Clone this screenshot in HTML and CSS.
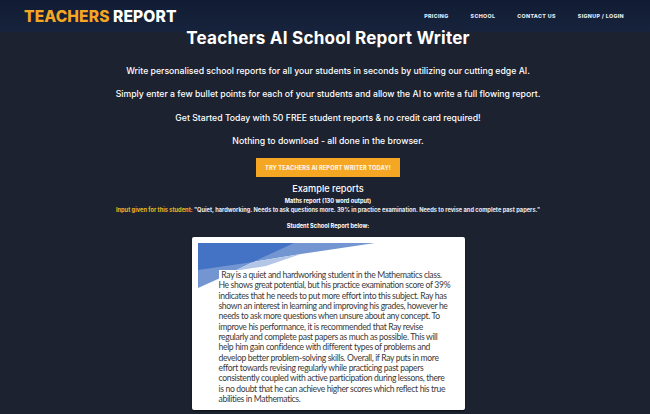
FILE: index.html
```html
<!DOCTYPE html>
<html lang="en">
<head>
<meta charset="utf-8">
<title>Teachers Report</title>
<link rel="stylesheet" href="styles.css">
</head>
<body>
<header class="topbar">
  <a class="brand"><span class="brand-accent">TEACHERS</span> REPORT</a>
  <nav class="nav">
    <a>PRICING</a>
    <a>SCHOOL</a>
    <a>CONTACT US</a>
    <a>SIGNUP / LOGIN</a>
  </nav>
</header>
<main class="content">
  <h1 class="title">Teachers AI School Report Writer</h1>
  <p class="lead">Write personalised school reports for all your students in seconds by utilizing our cutting edge AI.</p>
  <p class="lead">Simply enter a few bullet points for each of your students and allow the AI to write a full flowing report.</p>
  <p class="lead">Get Started Today with 50 FREE student reports &amp; no credit card required!</p>
  <p class="lead">Nothing to download - all done in the browser.</p>
  <a class="cta">TRY TEACHERS AI REPORT WRITER TODAY!</a>
  <h2 class="section">Example reports</h2>
  <p class="small">Maths report (130 word output)</p>
  <p class="small input"><span class="input-label">Input given for this student:</span> "Quiet, hardworking. Needs to ask questions more. 39% in practice examination. Needs to revise and complete past papers."</p>
  <p class="small below">Student School Report below:</p>
  <article class="report">
    <svg class="swoosh" width="180" height="45" viewBox="0 0 180 45" aria-hidden="true">
      <polygon points="0,0 177,0 103,11 55,19 20,36 0,45" fill="#7396d2"/>
      <polygon points="55,19 103,11 68,23 36,28" fill="#b4c6e7"/>
      <polygon points="0,0 96,0 55,19 0,27" fill="#4472c4"/>
    </svg>
    <p class="report-text"><span class="mask">&nbsp;Ray is a quiet and hardworking student in the Mathematics class.</span> He shows great potential, but his practice examination score of 39% indicates that he needs to put more effort into this subject. Ray has shown an interest in learning and improving his grades, however he needs to ask more questions when unsure about any concept. To improve his performance, it is recommended that Ray revise regularly and complete past papers as much as possible. This will help him gain confidence with different types of problems and develop better problem-solving skills. Overall, if Ray puts in more effort towards revising regularly while practicing past papers consistently coupled with active participation during lessons, there is no doubt that he can achieve higher scores which reflect his true abilities in Mathematics.</p>
  </article>
</main>
</body>
</html>
```
FILE: styles.css
```css
* { box-sizing: border-box; }
html, body { margin: 0; height: 100%; overflow: hidden; }
body {
  background: #1c2230;
  color: #fff;
  font-family: "Inter", "Open Sans", sans-serif;
}
.topbar {
  height: 32px;
  background: linear-gradient(#111c34, #17233c);
  display: flex;
  align-items: center;
  justify-content: space-between;
  padding: 0 26px 0 24px;
}
.brand { font-size: 15.6px; font-weight: 800; letter-spacing: 0.1px; }
.brand-accent { color: #f5a623; }
.nav { display: flex; gap: 22px; }
.nav a { font-size: 5.3px; font-weight: 800; letter-spacing: 0.35px; color: #e8eaf0; }
.content { display: flex; flex-direction: column; align-items: center; text-align: center; padding-left: 6px; }
.title { margin: 0; font-size: 17.1px; line-height: 12px; font-weight: 700; height: 12px; letter-spacing: 0.2px; }
.lead { margin: 0; font-size: 8.7px; line-height: 12px; font-weight: 500; }
.title + .lead { margin-top: 21px; }
.lead + .lead { margin-top: 11.3px; }
.cta {
  margin-top: 11px;
  width: 144px;
  height: 19px;
  background: #f5a623;
  color: #fdf3e0;
  font-size: 5.7px;
  font-weight: 800;
  letter-spacing: 0.1px;
  display: flex;
  align-items: center;
  justify-content: center;
}
.section { margin: 6px 0 0; font-size: 9.2px; line-height: 12px; font-weight: 500; }
.small { margin: 2px 0 0; font-size: 5.7px; line-height: 8px; font-weight: 700; white-space: nowrap; }
.input { margin-top: 1.5px; color: #e9ecf2; }
.input-label { color: #e8b923; }
.below { margin-top: 7.5px; }
.report {
  margin-top: 7px;
  width: 273px;
  height: 173px;
  background: #fff;
  border-radius: 2px;
  box-shadow: 0 1px 2px rgba(0,0,0,.6);
  padding: 6px;
  position: relative;
  text-align: left;
}
.swoosh { position: absolute; left: 6px; top: 6px; display: block; }
.report-text {
  position: relative;
  margin: 27px 0 0 21px;
  width: 232px;
  font-family: "Lato", "Open Sans", sans-serif;
  font-size: 8.6px;
  letter-spacing: -0.35px;
  line-height: 10.36px;
  color: #3a3a3a;
}
.mask { background: #fff; padding-left: 1px; }
```
